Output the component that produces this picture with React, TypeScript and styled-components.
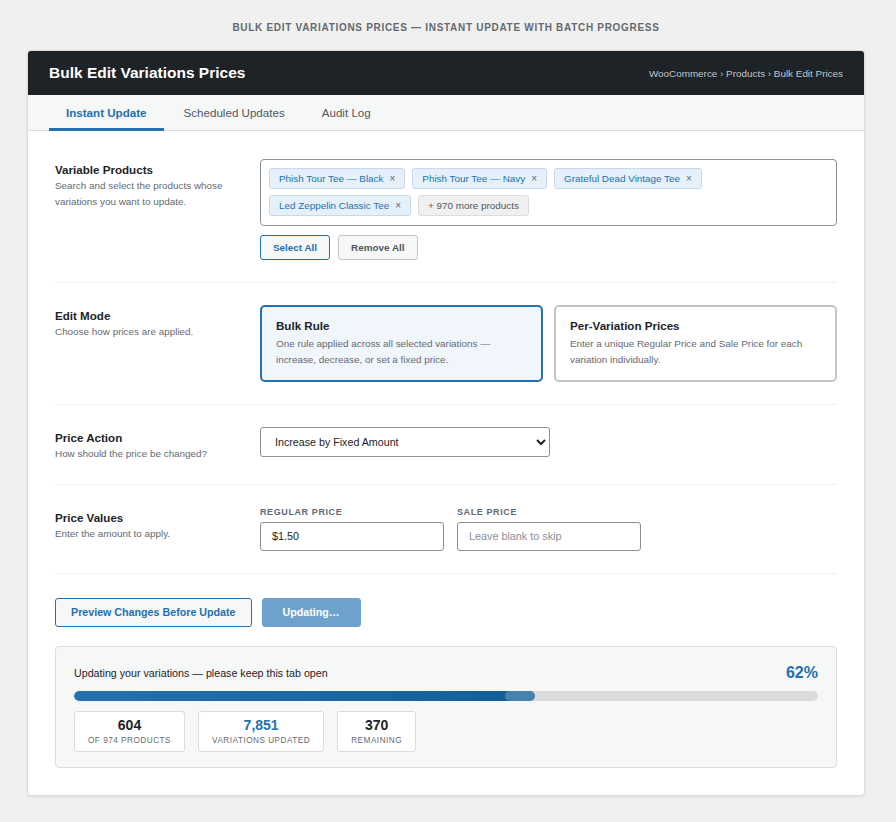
import styled, { createGlobalStyle } from "styled-components";

const GlobalStyle = createGlobalStyle`
    html, body {
        margin: 0;
        padding: 0;
        background-color: #f0f0f1;
        font-family: "Liberation Sans", Arial, sans-serif;
        color: #1d2327;
    }
    * {
        box-sizing: border-box;
    }
`;

const Page = styled.div`
    padding: 22px 0 26px 27px;
`;

const PageTitle = styled.div`
    text-align: center;
    font-size: 10px;
    line-height: 12px;
    font-weight: 700;
    letter-spacing: 0.7px;
    text-transform: uppercase;
    color: #646970;
    margin-bottom: 16px;
    padding-right: 31px;
`;

const Card = styled.div`
    width: 838px;
    background-color: #ffffff;
    border: 1px solid #dcdcde;
    border-radius: 4px;
    box-shadow: 0 1px 3px rgba(0, 0, 0, 0.08);
    overflow: hidden;
`;

const Header = styled.div`
    height: 44px;
    background-color: #1d2327;
    display: flex;
    align-items: center;
    justify-content: space-between;
    padding: 0 21px 0 21px;
`;

const HeaderTitle = styled.h1`
    margin: 0;
    font-size: 15.5px;
    font-weight: 700;
    color: #ffffff;
`;

const Breadcrumb = styled.div`
    font-size: 9.9px;
    color: #c3c4c7;
`;

const Tabs = styled.div`
    height: 36px;
    display: flex;
    padding: 0 21px;
    background-color: #f6f7f7;
    border-bottom: 1px solid #dcdcde;
`;

const Tab = styled.div<{ $active?: boolean }>`
    display: flex;
    align-items: center;
    padding: 2px 17px 0 17px;
    margin-right: 3px;
    font-size: 11.6px;
    font-weight: ${(p) => (p.$active ? 700 : 400)};
    color: ${(p) => (p.$active ? "#2271b1" : "#50575e")};
    border-bottom: 3px solid ${(p) => (p.$active ? "#2271b1" : "transparent")};
    margin-bottom: -1px;
`;

const Content = styled.div`
    padding: 6px 27px 27px 27px;
`;

const Section = styled.div`
    display: grid;
    grid-template-columns: 205px 1fr;
    padding: 22px 0;
    border-bottom: 1px solid #f0f0f1;
`;

const LabelCol = styled.div`
    padding-top: 4px;
`;

const SectionTitle = styled.div`
    font-size: 11.6px;
    line-height: 14px;
    font-weight: 700;
    color: #1d2327;
    margin-bottom: 1px;
`;

const SectionDesc = styled.div`
    font-size: 9.9px;
    line-height: 15.5px;
    color: #646970;
    padding-right: 20px;
`;

const TokenBox = styled.div`
    border: 1px solid #8c8f94;
    border-radius: 4px;
    padding: 8px 8px 9px 8px;
    display: flex;
    flex-wrap: wrap;
    gap: 6px 7px;
`;

const Token = styled.span<{ $muted?: boolean }>`
    display: inline-flex;
    align-items: center;
    height: 21px;
    padding: 0 9px;
    font-size: 9.9px;
    border-radius: 3px;
    background-color: ${(p) => (p.$muted ? "#f0f0f1" : "#e5f0fa")};
    border: 1px solid ${(p) => (p.$muted ? "#dcdcde" : "#c5d9ed")};
    color: ${(p) => (p.$muted ? "#50575e" : "#2271b1")};
`;

const TokenX = styled.span`
    margin-left: 6px;
    font-size: 10px;
    color: #646970;
`;

const ButtonRow = styled.div`
    display: flex;
    gap: 8px;
    margin-top: 9px;
`;

const SmallButton = styled.button<{ $primary?: boolean }>`
    height: 25px;
    padding: 0 12px;
    font-family: inherit;
    font-size: 9.9px;
    font-weight: 700;
    border-radius: 3px;
    background-color: #f6f7f7;
    border: 1px solid ${(p) => (p.$primary ? "#2271b1" : "#c3c4c7")};
    color: ${(p) => (p.$primary ? "#2271b1" : "#50575e")};
`;

const ModeGrid = styled.div`
    display: grid;
    grid-template-columns: 1fr 1fr;
    gap: 11px;
`;

const ModeCard = styled.div<{ $selected?: boolean }>`
    height: 77px;
    border-radius: 5px;
    border: 2px solid ${(p) => (p.$selected ? "#2271b1" : "#c3c4c7")};
    background-color: ${(p) => (p.$selected ? "#f0f6fc" : "#ffffff")};
    padding: 12px 14px;
`;

const ModeTitle = styled.div`
    font-size: 11.6px;
    line-height: 14px;
    font-weight: 700;
    color: #1d2327;
    margin-bottom: 3px;
`;

const ModeDesc = styled.div`
    font-size: 9.9px;
    line-height: 16px;
    color: #646970;
`;

const Select = styled.select`
    width: 290px;
    height: 30px;
    padding: 0 10px;
    font-family: inherit;
    font-size: 10.7px;
    color: #1d2327;
    background-color: #ffffff;
    border: 1px solid #8c8f94;
    border-radius: 3px;
`;

const PriceGrid = styled.div`
    display: flex;
    gap: 13px;
`;

const Field = styled.div`
    display: flex;
    flex-direction: column;
    width: 184px;
`;

const FieldLabel = styled.label`
    font-size: 9px;
    line-height: 11px;
    font-weight: 700;
    letter-spacing: 0.6px;
    text-transform: uppercase;
    color: #646970;
    margin-bottom: 4px;
`;

const Input = styled.input`
    height: 29px;
    padding: 0 11px;
    font-family: inherit;
    font-size: 10.8px;
    color: #1d2327;
    border: 1px solid #8c8f94;
    border-radius: 3px;

    &::placeholder {
        color: #8c8f94;
    }
`;

const Actions = styled.div`
    display: flex;
    gap: 10px;
    padding-top: 24px;
`;

const ActionButton = styled.button<{ $busy?: boolean }>`
    height: 29px;
    padding: 0 15px;
    font-family: inherit;
    font-size: 10.7px;
    font-weight: 700;
    border-radius: 3px;
    border: 1px solid ${(p) => (p.$busy ? "#6ea2cc" : "#2271b1")};
    background-color: ${(p) => (p.$busy ? "#6ea2cc" : "#f6f7f7")};
    color: ${(p) => (p.$busy ? "#ffffff" : "#2271b1")};
    width: ${(p) => (p.$busy ? "99px" : "auto")};
`;

const ProgressPanel = styled.div`
    margin-top: 19px;
    background-color: #f6f7f7;
    border: 1px solid #dcdcde;
    border-radius: 4px;
    padding: 17px 18px 15px 18px;
`;

const ProgressHead = styled.div`
    display: flex;
    justify-content: space-between;
    align-items: center;
    height: 18px;
    margin-bottom: 9px;
`;

const ProgressText = styled.div`
    font-size: 10.7px;
    color: #1d2327;
`;

const Percent = styled.div`
    font-size: 16px;
    font-weight: 700;
    color: #2271b1;
`;

const Track = styled.div`
    height: 10px;
    border-radius: 5px;
    background-color: #dcdcde;
    overflow: hidden;
`;

const Fill = styled.div`
    position: relative;
    height: 100%;
    border-radius: 5px;
    background: linear-gradient(90deg, #2271b1, #135e96);
`;

const Shine = styled.div`
    position: absolute;
    right: 0;
    top: 0;
    bottom: 0;
    width: 30px;
    border-radius: 5px;
    background-color: rgba(255, 255, 255, 0.22);
`;

const Stats = styled.div`
    display: flex;
    gap: 13px;
    margin-top: 10px;
`;

const Stat = styled.div`
    height: 41px;
    padding: 0 13px;
    background-color: #ffffff;
    border: 1px solid #dcdcde;
    border-radius: 3px;
    display: flex;
    flex-direction: column;
    align-items: center;
    justify-content: center;
`;

const StatValue = styled.div<{ $accent?: boolean }>`
    font-size: 14px;
    font-weight: 700;
    line-height: 16px;
    color: ${(p) => (p.$accent ? "#2271b1" : "#1d2327")};
`;

const StatLabel = styled.div`
    font-size: 8.2px;
    letter-spacing: 0.5px;
    text-transform: uppercase;
    color: #646970;
    margin-top: 3px;
`;

const products = [
    "Phish Tour Tee — Black",
    "Phish Tour Tee — Navy",
    "Grateful Dead Vintage Tee",
    "Led Zeppelin Classic Tee",
];

const progress = 62;

function App() {
    return (
        <Page>
            <GlobalStyle />
            <PageTitle>Bulk Edit Variations Prices — Instant Update with Batch Progress</PageTitle>
            <Card>
                <Header>
                    <HeaderTitle>Bulk Edit Variations Prices</HeaderTitle>
                    <Breadcrumb>WooCommerce › Products › Bulk Edit Prices</Breadcrumb>
                </Header>
                <Tabs>
                    <Tab $active>Instant Update</Tab>
                    <Tab>Scheduled Updates</Tab>
                    <Tab>Audit Log</Tab>
                </Tabs>

                <Content>
                    <Section>
                        <LabelCol>
                            <SectionTitle>Variable Products</SectionTitle>
                            <SectionDesc>Search and select the products whose variations you want to update.</SectionDesc>
                        </LabelCol>
                        <div>
                            <TokenBox>
                                {products.map((name) => (
                                    <Token key={name}>
                                        {name}
                                        <TokenX>×</TokenX>
                                    </Token>
                                ))}
                                <Token $muted>+ 970 more products</Token>
                            </TokenBox>
                            <ButtonRow>
                                <SmallButton $primary>Select All</SmallButton>
                                <SmallButton>Remove All</SmallButton>
                            </ButtonRow>
                        </div>
                    </Section>

                    <Section>
                        <LabelCol>
                            <SectionTitle>Edit Mode</SectionTitle>
                            <SectionDesc>Choose how prices are applied.</SectionDesc>
                        </LabelCol>
                        <ModeGrid>
                            <ModeCard $selected>
                                <ModeTitle>Bulk Rule</ModeTitle>
                                <ModeDesc>One rule applied across all selected variations — increase, decrease, or set a fixed price.</ModeDesc>
                            </ModeCard>
                            <ModeCard>
                                <ModeTitle>Per-Variation Prices</ModeTitle>
                                <ModeDesc>Enter a unique Regular Price and Sale Price for each variation individually.</ModeDesc>
                            </ModeCard>
                        </ModeGrid>
                    </Section>

                    <Section>
                        <LabelCol>
                            <SectionTitle>Price Action</SectionTitle>
                            <SectionDesc>How should the price be changed?</SectionDesc>
                        </LabelCol>
                        <div>
                            <Select defaultValue="inc-fixed">
                                <option value="inc-fixed">Increase by Fixed Amount</option>
                                <option value="dec-fixed">Decrease by Fixed Amount</option>
                                <option value="set">Set Fixed Price</option>
                            </Select>
                        </div>
                    </Section>

                    <Section>
                        <LabelCol>
                            <SectionTitle>Price Values</SectionTitle>
                            <SectionDesc>Enter the amount to apply.</SectionDesc>
                        </LabelCol>
                        <PriceGrid>
                            <Field>
                                <FieldLabel>Regular Price</FieldLabel>
                                <Input defaultValue="$1.50" />
                            </Field>
                            <Field>
                                <FieldLabel>Sale Price</FieldLabel>
                                <Input placeholder="Leave blank to skip" />
                            </Field>
                        </PriceGrid>
                    </Section>

                    <Actions>
                        <ActionButton>Preview Changes Before Update</ActionButton>
                        <ActionButton $busy>Updating…</ActionButton>
                    </Actions>

                    <ProgressPanel>
                        <ProgressHead>
                            <ProgressText>Updating your variations — please keep this tab open</ProgressText>
                            <Percent>{progress}%</Percent>
                        </ProgressHead>
                        <Track>
                            <Fill style={{ width: `${progress}%` }}>
                                <Shine />
                            </Fill>
                        </Track>
                        <Stats>
                            <Stat>
                                <StatValue>604</StatValue>
                                <StatLabel>of 974 products</StatLabel>
                            </Stat>
                            <Stat>
                                <StatValue $accent>7,851</StatValue>
                                <StatLabel>Variations updated</StatLabel>
                            </Stat>
                            <Stat>
                                <StatValue>370</StatValue>
                                <StatLabel>Remaining</StatLabel>
                            </Stat>
                        </Stats>
                    </ProgressPanel>
                </Content>
            </Card>
        </Page>
    );
}

export default App;
